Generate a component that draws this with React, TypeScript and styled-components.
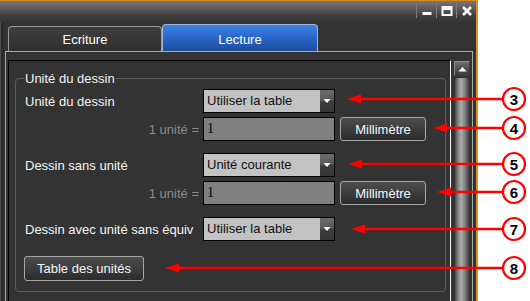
import React from "react";
import styled, { createGlobalStyle } from "styled-components";

const Global = createGlobalStyle`
  html, body { margin: 0; padding: 0; background: #fff; }
  body { font-family: "Liberation Sans", Arial, sans-serif; font-size: 13px; }
  #root { width: 530px; height: 301px; }
`;

const Page = styled.div`
  position: relative;
  width: 530px;
  height: 301px;
  overflow: hidden;
  background: #fff;
  display: flex;
`;

const Window = styled.div`
  width: 478px;
  height: 301px;
  box-sizing: border-box;
  border-top: 1px solid #d98a1f;
  border-right: 2px solid #e38d1e;
  background: #303030;
  display: flex;
  flex-direction: column;
`;

const TitleBar = styled.div`
  height: 21px;
  flex: none;
  display: flex;
  justify-content: flex-end;
  align-items: stretch;
  background: linear-gradient(#777, #5c5c5c 35%, #3e3e3e 70%, #353535);
`;

const WinButton = styled.div`
  width: 19px;
  margin: 2px 0 4px;
  border-left: 1px solid #7c7c7c;
  display: flex;
  align-items: center;
  justify-content: center;
`;

const Body = styled.div`
  flex: 1;
  min-height: 0;
  display: flex;
  flex-direction: column;
  padding: 0 3px 0 5px;
  background: #333;
  box-shadow: inset 1px 0 0 #4c4c4c, inset 4px 0 0 #2c2c2c;
`;

const TabRow = styled.div`
  height: 29px;
  flex: none;
  display: flex;
  align-items: flex-end;
  padding-left: 3px;
`;

const Tab = styled.div<{ $active?: boolean }>`
  box-sizing: border-box;
  width: ${(p) => (p.$active ? 156 : 154)}px;
  height: ${(p) => (p.$active ? 27 : 25)}px;
  padding-top: ${(p) => (p.$active ? 2 : 0)}px;
  border: 1px solid ${(p) => (p.$active ? "#9fb4d6" : "#9a9a9a")};
  border-bottom: none;
  border-radius: 4px 4px 0 0;
  background: ${(p) =>
    p.$active
      ? "linear-gradient(#3c82e6, #2c68cc 45%, #1e4c9e)"
      : "linear-gradient(#3e3e3e, #303030)"};
  color: #fff;
  font-size: 13px;
  display: flex;
  align-items: center;
  justify-content: center;
`;

const Pane = styled.div`
  flex: 1;
  min-height: 0;
  display: flex;
  gap: 3px;
  padding: 8px 2px 0 2px;
  border: 1px solid #a8a8a8;
  border-bottom: none;
`;

const InnerPanel = styled.div`
  width: 443px;
  box-sizing: border-box;
  border-top: 1px solid #000;
  border-left: 1px solid #000;
  border-right: 1px solid #f4f4f4;
  padding: 10px 4px 0 6px;
  background: #333;
`;

const Scrollbar = styled.div`
  width: 16px;
  margin-top: 1px;
  display: flex;
  flex-direction: column;
  gap: 2px;
`;

const ScrollUp = styled.div`
  height: 15px;
  box-sizing: border-box;
  border: 1px solid #8a8a8a;
  border-right-color: #3a3a3a;
  border-bottom-color: #3a3a3a;
  background: linear-gradient(#6e6e6e, #505050 50%, #3e3e3e);
  display: flex;
  align-items: center;
  justify-content: center;
`;

const Thumb = styled.div`
  flex: 1;
  margin: 0 1px;
  border-radius: 3px 3px 0 0;
  background: linear-gradient(90deg, #4a4a4a, #8a8a8a 25%, #ababab 45%, #808080 70%, #404040);
`;

const GroupBox = styled.fieldset`
  margin: 0;
  padding: 0 9px 10px 9px;
  border: 1px solid #5e5e5e;
  border-radius: 4px;
`;

const Legend = styled.legend`
  padding: 0 1px;
  margin-left: -1px;
  color: #f2f2f2;
  font-size: 13px;
  line-height: 15px;
`;

const Rows = styled.div`
  margin-top: 3px;
  display: flex;
  flex-direction: column;
  gap: 12px;
`;

const Section = styled.div`
  display: flex;
  flex-direction: column;
  gap: 4px;
`;

const Row = styled.div`
  display: flex;
  align-items: center;
  height: 24px;
`;

const Label = styled.div<{ $muted?: boolean }>`
  width: 178px;
  box-sizing: border-box;
  padding-right: ${(p) => (p.$muted ? 4 : 0)}px;
  text-align: ${(p) => (p.$muted ? "right" : "left")};
  color: ${(p) => (p.$muted ? "#8c8c8c" : "#f4f4f4")};
  white-space: nowrap;
`;

const Select = styled.div`
  width: 132px;
  height: 24px;
  box-sizing: border-box;
  border: 1px solid #000;
  background: #c3c3c3;
  display: flex;
`;

const SelectText = styled.div`
  flex: 1;
  padding-left: 3px;
  color: #111;
  line-height: 22px;
`;

const SelectArrow = styled.div`
  width: 14px;
  background: linear-gradient(#6c6c6c, #585858 45%, #3c3c3c 55%, #363636);
  display: flex;
  align-items: center;
  justify-content: center;
`;

const TextBox = styled.div`
  width: 132px;
  height: 24px;
  box-sizing: border-box;
  border: 1px solid #000;
  background: #808080;
  color: #000;
  padding-left: 3px;
  font-family: "Liberation Serif", "Times New Roman", serif;
  font-size: 14px;
  line-height: 22px;
`;

const PushButton = styled.div<{ $w: number; $h?: number; $ml?: number }>`
  width: ${(p) => p.$w}px;
  height: ${(p) => p.$h ?? 24}px;
  margin-left: ${(p) => p.$ml ?? 0}px;
  box-sizing: border-box;
  border: 1px solid #a6a6a6;
  border-radius: 3px;
  background: linear-gradient(#4e4e4e, #3c3c3c 50%, #2c2c2c);
  color: #f4f6ff;
  display: flex;
  align-items: center;
  justify-content: center;
`;

const ButtonRow = styled.div`
  margin-top: 3px;
  display: flex;
  margin-left: -1px;
`;

const Overlay = styled.svg`
  position: absolute;
  left: 0;
  top: 0;
  pointer-events: none;
`;

const DownArrow = () => (
  <svg width="8" height="6" viewBox="0 0 8 6">
    <polygon points="0.5,1 7.5,1 4,5" fill="#fff" />
  </svg>
);

const arrows = [
  { n: 3, y: 99, tip: 347 },
  { n: 4, y: 128, tip: 433 },
  { n: 5, y: 164, tip: 348 },
  { n: 6, y: 192, tip: 437 },
  { n: 7, y: 229, tip: 351 },
  { n: 8, y: 268, tip: 165 },
];

export default function App() {
  return (
    <Page>
      <Global />
      <Window>
        <TitleBar>
          <WinButton>
            <svg width="12" height="12" viewBox="0 0 12 12">
              <rect x="1.5" y="7" width="9" height="3" fill="#fff" />
            </svg>
          </WinButton>
          <WinButton>
            <svg width="12" height="12" viewBox="0 0 12 12">
              <rect x="1.5" y="2" width="9" height="8" fill="none" stroke="#fff" strokeWidth="2" />
              <rect x="1.5" y="2" width="9" height="3" fill="#fff" />
            </svg>
          </WinButton>
          <WinButton>
            <svg width="12" height="12" viewBox="0 0 12 12">
              <path d="M2 2 L10 10 M10 2 L2 10" stroke="#fff" strokeWidth="2.6" />
            </svg>
          </WinButton>
        </TitleBar>
        <Body>
          <TabRow>
            <Tab>Ecriture</Tab>
            <Tab $active>Lecture</Tab>
          </TabRow>
          <Pane>
            <InnerPanel>
              <GroupBox>
                <Legend>Unité du dessin</Legend>
                <Rows>
                  <Section>
                    <Row>
                      <Label>Unité du dessin</Label>
                      <Select>
                        <SelectText>Utiliser la table</SelectText>
                        <SelectArrow>
                          <DownArrow />
                        </SelectArrow>
                      </Select>
                    </Row>
                    <Row>
                      <Label $muted>1 unité =</Label>
                      <TextBox>1</TextBox>
                      <PushButton $w={86} $ml={5}>Millimètre</PushButton>
                    </Row>
                  </Section>
                  <Section>
                    <Row>
                      <Label>Dessin sans unité</Label>
                      <Select>
                        <SelectText>Unité courante</SelectText>
                        <SelectArrow>
                          <DownArrow />
                        </SelectArrow>
                      </Select>
                    </Row>
                    <Row>
                      <Label $muted>1 unité =</Label>
                      <TextBox>1</TextBox>
                      <PushButton $w={86} $ml={5}>Millimètre</PushButton>
                    </Row>
                  </Section>
                  <Row>
                    <Label>Dessin avec unité sans équiv</Label>
                    <Select>
                      <SelectText>Utiliser la table</SelectText>
                      <SelectArrow>
                        <DownArrow />
                      </SelectArrow>
                    </Select>
                  </Row>
                  <ButtonRow>
                    <PushButton $w={120} $h={25}>Table des unités</PushButton>
                  </ButtonRow>
                </Rows>
              </GroupBox>
            </InnerPanel>
            <Scrollbar>
              <ScrollUp>
                <svg width="9" height="6" viewBox="0 0 9 6">
                  <polygon points="0.5,5.5 8.5,5.5 4.5,1" fill="#fff" />
                </svg>
              </ScrollUp>
              <Thumb />
            </Scrollbar>
          </Pane>
        </Body>
      </Window>
      <Overlay width="530" height="301" viewBox="0 0 530 301">
        {arrows.map((a) => (
          <g key={a.n}>
            <line x1={a.tip + 10} y1={a.y} x2={503} y2={a.y} stroke="#f00" strokeWidth="2.5" />
            <polygon
              points={`${a.tip},${a.y} ${a.tip + 14},${a.y - 4.5} ${a.tip + 14},${a.y + 4.5}`}
              fill="#f00"
            />
            <circle cx="514" cy={a.y} r="11" fill="#fff" stroke="#f00" strokeWidth="2.2" />
            <text
              x="514"
              y={a.y + 5.5}
              textAnchor="middle"
              fontFamily="'Liberation Sans', Arial, sans-serif"
              fontWeight="bold"
              fontSize="15"
              fill="#000"
            >
              {a.n}
            </text>
          </g>
        ))}
      </Overlay>
    </Page>
  );
}
